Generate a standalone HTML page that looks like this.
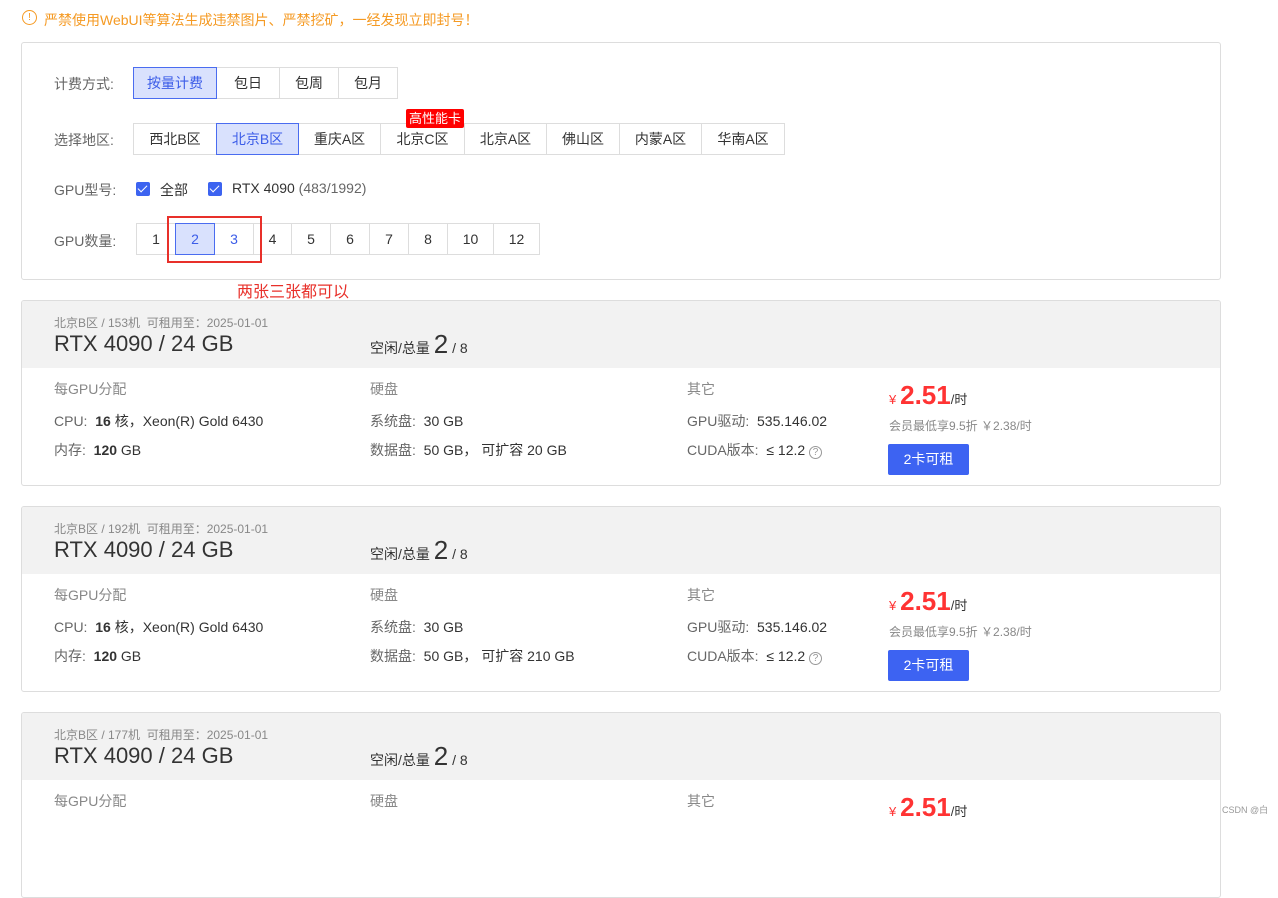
<!DOCTYPE html><html><head><meta charset="utf-8"><style>
*{margin:0;padding:0;box-sizing:border-box}
body{width:1278px;height:822px;overflow:hidden;background:#fff;font-family:"Liberation Sans","Noto Sans CJK SC",sans-serif;color:#333;position:relative;font-size:14px}
.a{position:absolute;white-space:nowrap}
.box{position:absolute;border:1px solid #ddd;border-radius:3px}
.btn{position:absolute;border:1px solid #ddd;text-align:center;font-size:14px;color:#333;background:#fff}
.sel{background:#d9e1fd;border-color:#4a6cf0;color:#3b5ce8;z-index:2}
.lab{color:#666;font-size:14px}
.chk{position:absolute;width:14px;height:14px;background:#3c63f0;border-radius:2px}
.chk:after{content:"";position:absolute;left:4px;top:1px;width:4px;height:8px;border:solid #fff;border-width:0 1.5px 1.5px 0;transform:rotate(45deg)}
.card{position:absolute;left:21px;width:1200px;height:186px;border:1px solid #ddd;border-radius:3px;overflow:hidden}
.hd{position:absolute;left:0;top:0;width:100%;height:67px;background:#f2f2f2}
.g{color:#888}
</style></head><body>
<div class="a" style="left:22px;top:10px;width:15px;height:15px;border:1.3px solid #f59a23;border-radius:50%;color:#f59a23;font-size:10px;text-align:center;line-height:13px">!</div>
<div class="a" style="left:44px;top:10px;color:#f59a23;font-size:14px">严禁使用WebUI等算法生成违禁图片、严禁挖矿，一经发现立即封号！</div>
<div class="box" style="left:21px;top:42px;width:1200px;height:238px"></div>
<div class="a lab" style="left:54px;top:74px">计费方式:</div>
<div class="btn sel" style="left:133px;top:67px;width:84px;height:32px;line-height:30px">按量计费</div>
<div class="btn" style="left:216px;top:67px;width:64px;height:32px;line-height:30px">包日</div>
<div class="btn" style="left:279px;top:67px;width:60px;height:32px;line-height:30px">包周</div>
<div class="btn" style="left:338px;top:67px;width:60px;height:32px;line-height:30px">包月</div>
<div class="a lab" style="left:54px;top:130px">选择地区:</div>
<div class="btn" style="left:133px;top:123px;width:84px;height:32px;line-height:30px">西北B区</div>
<div class="btn sel" style="left:216px;top:123px;width:83px;height:32px;line-height:30px">北京B区</div>
<div class="btn" style="left:298px;top:123px;width:83px;height:32px;line-height:30px">重庆A区</div>
<div class="btn" style="left:380px;top:123px;width:85px;height:32px;line-height:30px">北京C区</div>
<div class="btn" style="left:464px;top:123px;width:83px;height:32px;line-height:30px">北京A区</div>
<div class="btn" style="left:546px;top:123px;width:74px;height:32px;line-height:30px">佛山区</div>
<div class="btn" style="left:619px;top:123px;width:83px;height:32px;line-height:30px">内蒙A区</div>
<div class="btn" style="left:701px;top:123px;width:84px;height:32px;line-height:30px">华南A区</div>
<div class="a" style="left:406px;top:109px;width:58px;height:19px;background:#f00;color:#fff;font-size:13px;text-align:center;line-height:19px;border-radius:2px;z-index:3">高性能卡</div>
<div class="a lab" style="left:54px;top:180px">GPU型号:</div>
<div class="chk" style="left:136px;top:182px"></div><div class="a" style="left:160px;top:180px">全部</div>
<div class="chk" style="left:208px;top:182px"></div><div class="a" style="left:232px;top:180px">RTX 4090 <span style="color:#666">(483/1992)</span></div>
<div class="a lab" style="left:54px;top:231px">GPU数量:</div>
<div class="btn" style="left:136px;top:223px;width:40px;height:32px;line-height:30px">1</div>
<div class="btn sel" style="left:175px;top:223px;width:40px;height:32px;line-height:30px">2</div>
<div class="btn" style="left:214px;top:223px;width:40px;height:32px;line-height:30px;color:#3b5ce8">3</div>
<div class="btn" style="left:253px;top:223px;width:39px;height:32px;line-height:30px">4</div>
<div class="btn" style="left:291px;top:223px;width:40px;height:32px;line-height:30px">5</div>
<div class="btn" style="left:330px;top:223px;width:40px;height:32px;line-height:30px">6</div>
<div class="btn" style="left:369px;top:223px;width:40px;height:32px;line-height:30px">7</div>
<div class="btn" style="left:408px;top:223px;width:40px;height:32px;line-height:30px">8</div>
<div class="btn" style="left:447px;top:223px;width:47px;height:32px;line-height:30px">10</div>
<div class="btn" style="left:493px;top:223px;width:47px;height:32px;line-height:30px">12</div>
<div class="a" style="left:167px;top:216px;width:95px;height:47px;border:2px solid #e8302a;z-index:4"></div>
<div class="a" style="left:237px;top:283px;color:#e8302a;font-size:16px;line-height:20px;z-index:9">两张三张都可以</div>

<div class="card" style="top:300px"><div class="hd"></div>
<div class="a g" style="left:32px;top:13px;font-size:12px">北京B区 / 153机&nbsp;&nbsp;可租用至：2025-01-01</div>
<div class="a" style="left:32px;top:30px;font-size:22px">RTX 4090 / 24 GB</div>
<div class="a" style="left:348px;top:28px;font-size:14px">空闲/总量 <span style="font-size:26px">2</span> / 8</div>
<div class="a g" style="left:32px;top:78px">每GPU分配</div><div class="a g" style="left:348px;top:78px">硬盘</div><div class="a g" style="left:665px;top:78px">其它</div>
<div class="a" style="left:32px;top:110px"><span style="color:#666">CPU:</span>&nbsp; <b>16</b> 核，Xeon(R) Gold 6430</div>
<div class="a" style="left:32px;top:139px"><span style="color:#666">内存:</span>&nbsp; <b>120</b> GB</div>
<div class="a" style="left:348px;top:110px"><span style="color:#666">系统盘:</span>&nbsp; 30 GB</div>
<div class="a" style="left:348px;top:139px"><span style="color:#666">数据盘:</span>&nbsp; 50 GB， 可扩容 20 GB</div>
<div class="a" style="left:665px;top:110px"><span style="color:#666">GPU驱动:</span>&nbsp; 535.146.02</div>
<div class="a" style="left:665px;top:139px"><span style="color:#666">CUDA版本:</span>&nbsp; ≤ 12.2 <span style="display:inline-block;width:13px;height:13px;border:1px solid #999;border-radius:50%;font-size:10px;line-height:11px;text-align:center;color:#999">?</span></div>
<div class="a" style="left:867px;top:79px;color:#f33"><span style="font-size:13px">¥</span> <b style="font-size:26px">2.51</b><span style="color:#333;font-size:13px">/时</span></div>
<div class="a g" style="left:867px;top:116px;font-size:12px">会员最低享9.5折 ￥2.38/时</div>
<div class="a" style="left:866px;top:143px;width:81px;height:31px;background:#3d63f2;color:#fff;text-align:center;line-height:31px;border-radius:2px">2卡可租</div>
</div>

<div class="card" style="top:506px"><div class="hd"></div>
<div class="a g" style="left:32px;top:13px;font-size:12px">北京B区 / 192机&nbsp;&nbsp;可租用至：2025-01-01</div>
<div class="a" style="left:32px;top:30px;font-size:22px">RTX 4090 / 24 GB</div>
<div class="a" style="left:348px;top:28px;font-size:14px">空闲/总量 <span style="font-size:26px">2</span> / 8</div>
<div class="a g" style="left:32px;top:78px">每GPU分配</div><div class="a g" style="left:348px;top:78px">硬盘</div><div class="a g" style="left:665px;top:78px">其它</div>
<div class="a" style="left:32px;top:110px"><span style="color:#666">CPU:</span>&nbsp; <b>16</b> 核，Xeon(R) Gold 6430</div>
<div class="a" style="left:32px;top:139px"><span style="color:#666">内存:</span>&nbsp; <b>120</b> GB</div>
<div class="a" style="left:348px;top:110px"><span style="color:#666">系统盘:</span>&nbsp; 30 GB</div>
<div class="a" style="left:348px;top:139px"><span style="color:#666">数据盘:</span>&nbsp; 50 GB， 可扩容 210 GB</div>
<div class="a" style="left:665px;top:110px"><span style="color:#666">GPU驱动:</span>&nbsp; 535.146.02</div>
<div class="a" style="left:665px;top:139px"><span style="color:#666">CUDA版本:</span>&nbsp; ≤ 12.2 <span style="display:inline-block;width:13px;height:13px;border:1px solid #999;border-radius:50%;font-size:10px;line-height:11px;text-align:center;color:#999">?</span></div>
<div class="a" style="left:867px;top:79px;color:#f33"><span style="font-size:13px">¥</span> <b style="font-size:26px">2.51</b><span style="color:#333;font-size:13px">/时</span></div>
<div class="a g" style="left:867px;top:116px;font-size:12px">会员最低享9.5折 ￥2.38/时</div>
<div class="a" style="left:866px;top:143px;width:81px;height:31px;background:#3d63f2;color:#fff;text-align:center;line-height:31px;border-radius:2px">2卡可租</div>
</div>

<div class="card" style="top:712px"><div class="hd"></div>
<div class="a g" style="left:32px;top:13px;font-size:12px">北京B区 / 177机&nbsp;&nbsp;可租用至：2025-01-01</div>
<div class="a" style="left:32px;top:30px;font-size:22px">RTX 4090 / 24 GB</div>
<div class="a" style="left:348px;top:28px;font-size:14px">空闲/总量 <span style="font-size:26px">2</span> / 8</div>
<div class="a g" style="left:32px;top:78px">每GPU分配</div><div class="a g" style="left:348px;top:78px">硬盘</div><div class="a g" style="left:665px;top:78px">其它</div>
<div class="a" style="left:867px;top:79px;color:#f33"><span style="font-size:13px">¥</span> <b style="font-size:26px">2.51</b><span style="color:#333;font-size:13px">/时</span></div>
</div>
<div class="a" style="left:1222px;top:803px;font-size:9px;color:#999">CSDN @白</div>
</body></html>
